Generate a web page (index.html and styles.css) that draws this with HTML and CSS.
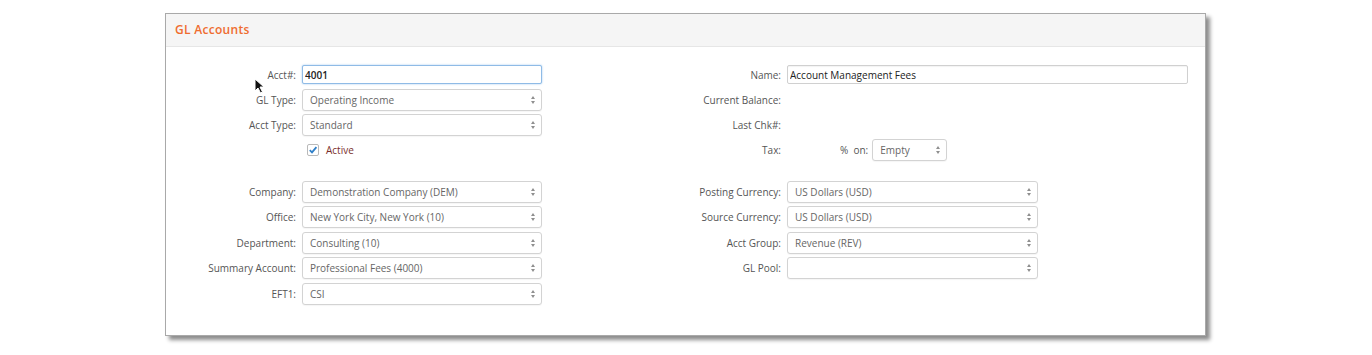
FILE: index.html
```html
<!DOCTYPE html>
<html>
<head>
<meta charset="utf-8">
<link rel="stylesheet" href="styles.css">
</head>
<body>
<div class="panel">
  <div class="panel-head">GL Accounts</div>
  <div class="panel-body">
    <div class="grid top">
      <label class="lbl">Acct#:</label>
      <div class="fld"><input class="txt focus" value="4001"></div>
      <label class="lbl">Name:</label>
      <div class="fld"><input class="txt wide" value="Account Management Fees"></div>

      <label class="lbl">GL Type:</label>
      <div class="fld"><div class="sel">Operating Income</div></div>
      <label class="lbl">Current Balance:</label>
      <div class="fld"></div>

      <label class="lbl">Acct Type:</label>
      <div class="fld"><div class="sel">Standard</div></div>
      <label class="lbl">Last Chk#:</label>
      <div class="fld"></div>

      <div></div>
      <div class="fld chk">
        <span class="box"><svg width="10" height="10" viewBox="0 0 10 10"><path d="M1.8 5.2 L4 7.4 L8.4 2.2" fill="none" stroke="#2f7fc8" stroke-width="1.8"/></svg></span>
        <span class="chk-lbl">Active</span>
      </div>
      <label class="lbl">Tax:</label>
      <div class="fld tax"><span class="pct">% &nbsp;on:</span><div class="sel small">Empty</div></div>
    </div>

    <div class="grid bottom">
      <label class="lbl">Company:</label>
      <div class="fld"><div class="sel">Demonstration Company (DEM)</div></div>
      <label class="lbl">Posting Currency:</label>
      <div class="fld"><div class="sel mid">US Dollars (USD)</div></div>

      <label class="lbl">Office:</label>
      <div class="fld"><div class="sel">New York City, New York (10)</div></div>
      <label class="lbl">Source Currency:</label>
      <div class="fld"><div class="sel mid">US Dollars (USD)</div></div>

      <label class="lbl">Department:</label>
      <div class="fld"><div class="sel">Consulting (10)</div></div>
      <label class="lbl">Acct Group:</label>
      <div class="fld"><div class="sel mid">Revenue (REV)</div></div>

      <label class="lbl">Summary Account:</label>
      <div class="fld"><div class="sel">Professional Fees (4000)</div></div>
      <label class="lbl">GL Pool:</label>
      <div class="fld"><div class="sel mid"></div></div>

      <label class="lbl">EFT1:</label>
      <div class="fld"><div class="sel">CSI</div></div>
      <div></div>
      <div></div>
    </div>
  </div>
</div>
<svg class="cursor" width="12" height="16" viewBox="0 0 12 16"><path d="M1 1 L1 13 L4 10 L6.5 15 L8.5 14 L6 9 L10 9 Z" fill="#111" stroke="#fff" stroke-width="1"/></svg>
</body>
</html>
```
FILE: styles.css
```css
html, body {
  margin: 0;
  padding: 0;
  background: #fff;
}
body {
  font-family: "Open Sans", "Liberation Sans", sans-serif;
  font-size: 10px;
  color: #555;
  position: relative;
  width: 1372px;
  height: 355px;
  padding-top: 13px;
  box-sizing: border-box;
}
.panel {
  margin-left: 165px;
  width: 1041px;
  height: 323px;
  border: 1px solid #a9a9a9;
  box-sizing: border-box;
  box-shadow: 4px 4px 4px rgba(0, 0, 0, 0.45);
  background: #fff;
}
.panel-head {
  height: 33px;
  box-sizing: border-box;
  background: #f5f5f5;
  border-bottom: 1px solid #e6e6e6;
  padding-left: 9px;
  line-height: 31px;
  font-weight: 600;
  font-size: 12px;
  color: #ef6c2f;
  letter-spacing: 0.3px;
}
.panel-body {
  padding-top: 15px;
}
.grid {
  display: grid;
  grid-template-columns: 130px 240px 233px 401px;
  column-gap: 6px;
  grid-auto-rows: 25px;
  align-items: center;
}
.bottom {
  margin-top: 17px;
  grid-auto-rows: 25.5px;
}
.lbl {
  text-align: right;
  white-space: nowrap;
  color: #555;
}
.fld {
  display: flex;
  align-items: center;
}
.txt {
  width: 100%;
  height: 19px;
  box-sizing: border-box;
  border: 1px solid #d0d0d0;
  border-radius: 2px;
  padding: 0 2px;
  font-family: inherit;
  font-size: 10px;
  color: #222;
  outline: none;
  box-shadow: inset 0 1px 1px rgba(0,0,0,0.05);
}
.txt.focus {
  border-color: #8fbbe6;
  box-shadow: 0 0 2px rgba(82, 156, 230, 0.6);
  font-weight: 600;
}
.txt.wide {
  width: 401px;
}
.sel {
  position: relative;
  width: 240px;
  height: 22px;
  box-sizing: border-box;
  border: 1px solid #d3d3d3;
  border-radius: 3px;
  padding-left: 7px;
  line-height: 20px;
  color: #666;
  background: #fff;
  box-shadow: 0 1px 1px rgba(0,0,0,0.04);
}
.sel::before,
.sel::after {
  content: "";
  position: absolute;
  right: 6px;
  width: 0;
  height: 0;
  border-left: 2.5px solid transparent;
  border-right: 2.5px solid transparent;
}
.sel::before {
  top: 6px;
  border-bottom: 3px solid #8f8f8f;
}
.sel::after {
  top: 11px;
  border-top: 3px solid #8f8f8f;
}
.sel.mid {
  width: 251px;
}
.sel.small {
  width: 75px;
}
.chk {
  padding-left: 5px;
  gap: 6px;
}
.box {
  width: 10px;
  height: 10px;
  border: 1px solid #b9b9b9;
  border-radius: 2px;
  display: flex;
  align-items: center;
  justify-content: center;
  background: #fff;
}
.chk-lbl {
  color: #7a2e2a;
  margin-left: 1px;
}
.tax {
  padding-left: 53px;
  gap: 4px;
}
.pct {
  color: #555;
}
.cursor {
  position: absolute;
  left: 254px;
  top: 78px;
}
```
